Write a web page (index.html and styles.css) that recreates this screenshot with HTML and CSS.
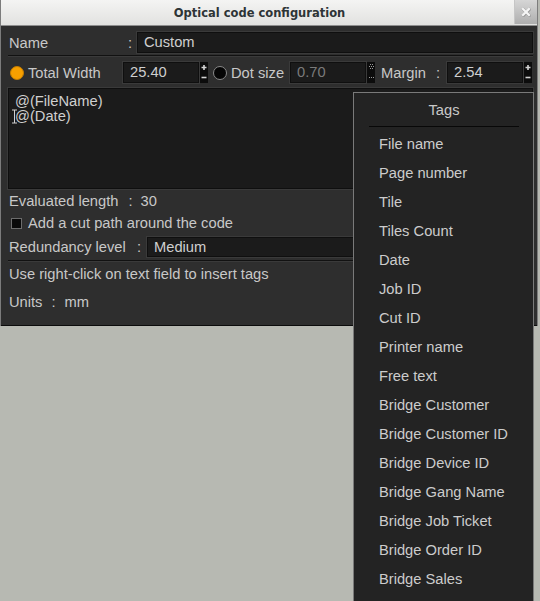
FILE: index.html
```html
<!DOCTYPE html>
<html>
<head>
<meta charset="utf-8">
<link rel="stylesheet" href="styles.css">
</head>
<body>
<div class="window">
  <div class="titlebar">
    <div class="title">Optical code configuration</div>
    <div class="close">
      <svg width="10" height="10" viewBox="0 0 10 10"><path d="M2 2 L8 8 M8 2 L2 8" stroke="#9a9a9a" stroke-width="3" stroke-linecap="square" transform="translate(0.5 0.5)"/><path d="M2 2 L8 8 M8 2 L2 8" stroke="#f6f6f6" stroke-width="2.2" stroke-linecap="square"/></svg>
    </div>
  </div>
  <div class="dialog">
    <div class="row name-row">
      <span class="name-label">Name</span>
      <span class="colon name-colon">:</span>
      <div class="field grow">Custom</div>
    </div>
    <div class="sep"></div>
    <div class="row size-row">
      <span class="radio on"></span>
      <span class="lbl tw-label">Total Width</span>
      <div class="field num">25.40</div>
      <div class="spin">
        <svg width="8" height="21" viewBox="0 0 8 21"><path d="M1.5 5.5 H6.5 M4 3 V8" stroke="#d4d4d4" stroke-width="1.6"/><path d="M1.5 15.5 H6.5" stroke="#d4d4d4" stroke-width="1.6"/></svg>
      </div>
      <span class="radio off"></span>
      <span class="lbl ds-label">Dot size</span>
      <div class="field num disabled">0.70</div>
      <div class="spin">
        <svg width="8" height="21" viewBox="0 0 8 21" fill="#9a9a9a"><rect x="3" y="2" width="1" height="1"/><rect x="5" y="2" width="1" height="1"/><rect x="2" y="4" width="1" height="1"/><rect x="4" y="4" width="1" height="1"/><rect x="6" y="4" width="1" height="1"/><rect x="3" y="6" width="1" height="1"/><rect x="5" y="6" width="1" height="1"/><rect x="2" y="15" width="1" height="1"/><rect x="4" y="15" width="1" height="1"/><rect x="6" y="15" width="1" height="1"/></svg>
      </div>
      <span class="lbl mg-label">Margin</span>
      <span class="colon mg-colon">:</span>
      <div class="field num">2.54</div>
      <div class="spin">
        <svg width="8" height="21" viewBox="0 0 8 21"><path d="M1.5 5.5 H6.5 M4 3 V8" stroke="#d4d4d4" stroke-width="1.6"/><path d="M1.5 15.5 H6.5" stroke="#d4d4d4" stroke-width="1.6"/></svg>
      </div>
    </div>
    <div class="textarea">
      <div class="tline">@(FileName)</div>
      <div class="tline">@(Date)</div>
      <svg class="ibeam" width="5" height="15" viewBox="0 0 5 15"><path d="M0 1 H5 M2.5 1 V14 M0 14 H5" stroke="#d0d0d0" stroke-width="1"/></svg>
    </div>
    <div class="row eval-row">
      <span>Evaluated length</span>
      <span class="colon ev-colon">:</span>
      <span class="ev-val">30</span>
    </div>
    <div class="row check-row">
      <span class="checkbox"></span>
      <span>Add a cut path around the code</span>
    </div>
    <div class="row red-row">
      <span class="red-label">Redundancy level</span>
      <span class="colon red-colon">:</span>
      <div class="field grow combo">Medium</div>
    </div>
    <div class="sep sep2"></div>
    <div class="row hint-row">Use right-click on text field to insert tags</div>
    <div class="row units-row">
      <span>Units</span>
      <span class="colon un-colon">:</span>
      <span class="un-val">mm</span>
    </div>
  </div>
</div>
<div class="menu">
  <div class="menu-head">Tags</div>
  <ul class="items">
    <li>File name</li>
    <li>Page number</li>
    <li>Tile</li>
    <li>Tiles Count</li>
    <li>Date</li>
    <li>Job ID</li>
    <li>Cut ID</li>
    <li>Printer name</li>
    <li>Free text</li>
    <li>Bridge Customer</li>
    <li>Bridge Customer ID</li>
    <li>Bridge Device ID</li>
    <li>Bridge Gang Name</li>
    <li>Bridge Job Ticket</li>
    <li>Bridge Order ID</li>
    <li>Bridge Sales</li>
  </ul>
</div>
</body>
</html>
```
FILE: styles.css
```css
html, body {
  margin: 0;
  padding: 0;
}
body {
  width: 540px;
  height: 601px;
  overflow: hidden;
  background: #b7b9b2;
  font-family: "Liberation Sans", Arial, sans-serif;
  font-size: 14.7px;
  color: #c8c8c8;
  position: relative;
}
.window {
  width: 536px;
  border-left: 1px solid #7c7c7c;
  border-right: 1px solid #7c7c7c;
}
.titlebar {
  height: 25px;
  display: flex;
  background: linear-gradient(#f4f4f3, #e2e2e0);
  border-bottom: 1px solid #8e8e8e;
}
.title {
  flex: 1;
  text-align: center;
  font-family: "DejaVu Sans", sans-serif;
  font-weight: bold;
  font-size: 11.5px;
  line-height: 26px;
  color: #2e3436;
  padding-left: 4px;
}
.close {
  width: 22px;
  height: 24px;
  background: linear-gradient(#d6d6d6, #aeaeae);
  border-left: 1px solid #c6c6c6;
  display: flex;
  align-items: center;
  justify-content: center;
}
.dialog {
  background: #2e2e2e;
  padding: 6px 4px 6px 7px;
  border-bottom: 1px solid #0c0c0c;
  height: 287px;
}
.row {
  display: flex;
  align-items: center;
}
.name-row {
  height: 21px;
}
.name-label {
  width: 119px;
  padding-left: 1px;
}
.colon {
  display: inline-block;
}
.name-colon {
  width: 9px;
}
.field {
  box-sizing: border-box;
  height: 21px;
  background: #1b1b1b;
  border: 1px solid #0f0f0f;
  box-shadow: 0 0 0 1px #3a3a3a;
  padding-left: 6px;
  line-height: 19px;
  color: #cfcfcf;
}
.grow {
  flex: 1;
}
.sep {
  height: 1px;
  background: #111111;
  border-bottom: 1px solid #3a3a3a;
  margin-top: 2px;
}
.size-row {
  height: 21px;
  margin-top: 5px;
}
.radio {
  box-sizing: border-box;
  width: 14px;
  height: 14px;
  border-radius: 50%;
  flex: none;
}
.radio.on {
  margin-left: 2px;
  background: #f7a000;
  border: 1px solid #c47d00;
}
.radio.off {
  margin-left: 5px;
  background: #050505;
  border: 1px solid #8a8a8a;
}
.lbl {
  flex: none;
}
.tw-label {
  width: 95px;
  padding-left: 4px;
}
.ds-label {
  width: 59px;
  padding-left: 4px;
}
.mg-label {
  width: 55px;
  padding-left: 6px;
}
.mg-colon {
  width: 11px;
}
.num {
  width: 76px;
  flex: none;
}
.disabled {
  color: #7a7a7a;
}
.spin {
  width: 8px;
  height: 21px;
  margin-left: 1px;
  background: #0c0c0c;
  flex: none;
}
.spin svg {
  display: block;
}
.textarea {
  position: relative;
  box-sizing: border-box;
  height: 101px;
  margin-top: 5px;
  background: #1b1b1b;
  border: 1px solid #0f0f0f;
  box-shadow: 0 0 0 1px #3a3a3a;
  padding: 5px 0 0 6px;
  color: #cfcfcf;
}
.tline {
  line-height: 15px;
}
.ibeam {
  position: absolute;
  left: 3px;
  top: 20px;
}
.eval-row {
  height: 24px;
  padding-left: 1px;
}
.ev-colon {
  margin-left: 10px;
}
.ev-val {
  margin-left: 8px;
}
.check-row {
  height: 20px;
}
.checkbox {
  box-sizing: border-box;
  width: 11px;
  height: 11px;
  margin-left: 3px;
  margin-right: 6px;
  background: #0a0a0a;
  border: 1px solid #6c6c6c;
}
.red-row {
  height: 20px;
  margin-top: 4px;
}
.red-label {
  width: 128px;
  padding-left: 1px;
}
.red-colon {
  width: 10px;
}
.combo {
  height: 20px;
}
.sep2 {
  margin-top: 3px;
}
.hint-row {
  height: 24px;
  padding-left: 1px;
}
.units-row {
  height: 32px;
  padding-left: 1px;
}
.un-colon {
  margin-left: 9px;
}
.un-val {
  margin-left: 9px;
}
.menu {
  position: absolute;
  left: 353px;
  top: 92px;
  width: 179px;
  height: 520px;
  background: #232323;
  border: 1px solid #7a7a7a;
}
.menu-head {
  height: 33px;
  line-height: 34px;
  text-align: center;
  margin: 0 14px 0 15px;
  border-bottom: 1px solid #080808;
}
.items {
  list-style: none;
  margin: 3px 0 0 0;
  padding: 0 0 0 25px;
}
.items li {
  height: 29px;
  line-height: 29px;
  color: #cccccc;
}
```
